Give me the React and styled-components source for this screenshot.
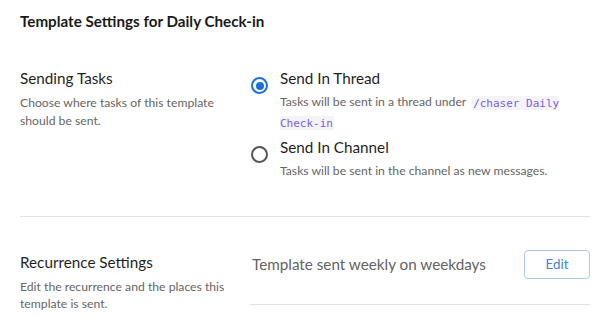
import React from 'react';
import styled, { createGlobalStyle } from 'styled-components';

const GlobalStyle = createGlobalStyle`
    body {
        margin: 0;
        background: #ffffff;
        font-family: Lato, "Noto Sans", sans-serif;
    }
`

const Page = styled.div`
    padding: 10px 20px 0 20px;
`

const Title = styled.h1`
    margin: 0;
    font-size: 15.2px;
    line-height: 22px;
    font-weight: 700;
    color: #1a1a1a;
`

const Section = styled.div`
    display: flex;
    padding: ${props => props.$top}px 0 ${props => props.$bottom}px 0;
    border-bottom: ${props => props.$divider ? '1px solid #e2e2e2' : 'none'};
`

const Info = styled.div`
    width: 230px;
    flex-shrink: 0;
`

const Heading = styled.h2`
    margin: 0;
    font-size: 15.25px;
    line-height: 22px;
    font-weight: 400;
    color: #1f1f1f;
`

const Desc = styled.p`
    margin: 5px 0 0 0;
    font-size: 12.2px;
    line-height: 17.5px;
    color: #666;
`

const Options = styled.div`
    flex: 1;
    display: flex;
    flex-direction: column;
    gap: 2.5px;
`

const Option = styled.label`
    display: flex;
    gap: 12px;
    padding-left: 1px;
    cursor: pointer;
`

const Radio = styled.span`
    width: 17px;
    height: 17px;
    margin-top: 10px;
    flex-shrink: 0;
    box-sizing: border-box;
    border-radius: 50%;
    border: 2px solid ${props => props.$checked ? '#1a6fdc' : '#555'};
    display: flex;
    align-items: center;
    justify-content: center;
    &::after {
        content: '';
        width: 8px;
        height: 8px;
        border-radius: 50%;
        background: #1a6fdc;
        display: ${props => props.$checked ? 'block' : 'none'};
    }
`

const OptionTitle = styled.div`
    font-size: 15.25px;
    line-height: 22px;
    color: #1f1f1f;
`

const OptionDesc = styled.div`
    margin-top: 3.3px;
    font-size: 12.2px;
    line-height: 20.6px;
    color: #666;
`

const Code = styled.code`
    font-family: "DejaVu Sans Mono", "Liberation Mono", monospace;
    font-size: 11px;
    line-height: 12px;
    color: #7b5ce9;
    background: #f4f4f5;
    padding: 0.5px 1px;
    margin-left: 3px;
`

const Recurrence = styled.div`
    flex: 1;
    display: flex;
    align-items: center;
    justify-content: space-between;
    padding: 0 0 25px 2px;
    margin-top: -1px;
    border-bottom: 1px solid #e2e2e2;
    align-self: flex-start;
`

const Summary = styled.span`
    font-size: 15.25px;
    color: #636363;
`

const EditButton = styled.button`
    width: 66px;
    height: 29px;
    padding: 0;
    font-family: inherit;
    font-size: 13.3px;
    color: #3b86dc;
    background: #fff;
    border: 1px solid #a8c8ee;
    border-radius: 4px;
    cursor: pointer;
`

export default function App() {
    return (
        <Page>
            <GlobalStyle />
            <Title>Template Settings for Daily Check-in</Title>
            <Section $top={35} $bottom={34} $divider>
                <Info>
                    <Heading>Sending Tasks</Heading>
                    <Desc>Choose where tasks of this template should be sent.</Desc>
                </Info>
                <Options>
                    <Option>
                        <Radio $checked />
                        <div>
                            <OptionTitle>Send In Thread</OptionTitle>
                            <OptionDesc>
                                Tasks will be sent in a thread under <Code>/chaser Daily Check-in</Code>
                            </OptionDesc>
                        </div>
                    </Option>
                    <Option>
                        <Radio />
                        <div>
                            <OptionTitle>Send In Channel</OptionTitle>
                            <OptionDesc>Tasks will be sent in the channel as new messages.</OptionDesc>
                        </div>
                    </Option>
                </Options>
            </Section>
            <Section $top={34} $bottom={0}>
                <Info>
                    <Heading>Recurrence Settings</Heading>
                    <Desc>Edit the recurrence and the places this template is sent.</Desc>
                </Info>
                <Recurrence>
                    <Summary>Template sent weekly on weekdays</Summary>
                    <EditButton>Edit</EditButton>
                </Recurrence>
            </Section>
        </Page>
    )
}
